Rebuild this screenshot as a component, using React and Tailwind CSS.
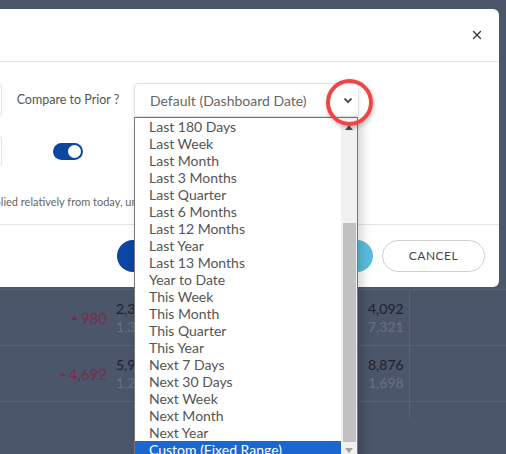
import { X } from "lucide-react";

const options = [
    "Last 180 Days",
    "Last Week",
    "Last Month",
    "Last 3 Months",
    "Last Quarter",
    "Last 6 Months",
    "Last 12 Months",
    "Last Year",
    "Last 13 Months",
    "Year to Date",
    "This Week",
    "This Month",
    "This Quarter",
    "This Year",
    "Next 7 Days",
    "Next 30 Days",
    "Next Week",
    "Next Month",
    "Next Year",
    "Custom (Fixed Range)",
];

const rows = [
    { delta: "980", a: "2,304", b: "1,324", c: "4,092", d: "7,321" },
    { delta: "4,692", a: "5,951", b: "1,268", c: "8,876", d: "1,698" },
];

function TableRow({ row }) {
    return (
        <div className="flex h-[56px] border-b border-[#58627a] text-[14px] leading-[18px]">
            <div className="w-[107px] flex items-center justify-end gap-[3px] text-[#7b2c50] text-[15px]">
                <svg width="7" height="4" viewBox="0 0 7 4">
                    <path d="M0 4 L3.5 0 L7 4 Z" fill="#7b2c50" />
                </svg>
                {row.delta}
            </div>
            <div className="w-[252px] pl-[9px] flex flex-col justify-center">
                <span className="text-[#1c2130]">{row.a}</span>
                <span className="text-[#687084]">{row.b}</span>
            </div>
            <div className="w-[51px] pl-[9px] flex flex-col justify-center border-r border-[#58627a]">
                <span className="text-[#1c2130]">{row.c}</span>
                <span className="text-[#687084]">{row.d}</span>
            </div>
            <div className="flex-1" />
        </div>
    );
}

export default function App() {
    return (
        <div className="relative w-[506px] h-[454px] overflow-hidden bg-[#4c566a] font-['Lato',sans-serif]">
            {/* dimmed page behind the modal */}
            <div className="h-[290px] border-b border-[#58627a]" />
            {rows.map((row) => (
                <TableRow key={row.delta} row={row} />
            ))}
            <div className="h-[16px] border-r border-[#58627a] w-[410px]" />

            {/* ================= MODAL ================= */}
            <div className="absolute left-[-100px] top-[9px] w-[599px] h-[278px] bg-white rounded-md flex flex-col text-[#555]">
                <div className="h-[53px] flex items-center justify-end pr-[15px] border-b border-[#e4e4e4]">
                    <X size={14} strokeWidth={2.2} className="text-[#333]" />
                </div>

                <div className="flex-1 px-[20px] pt-[21px]">
                    <div className="flex items-center">
                        <div className="w-[82px] h-[34px] border border-[#e2e2e2] rounded" />
                        <div className="w-[132px] text-center text-[12.5px]">
                            Compare to Prior ?
                        </div>
                        <div className="w-[225px] h-[34px] border border-[#e2e2e2] rounded shadow-[0_2px_4px_rgba(0,0,0,0.08)] flex items-center justify-between pl-[15px] pr-[5px] text-[14px] text-[#666]">
                            Default (Dashboard Date)
                            <svg width="10" height="7" viewBox="0 0 10 7">
                                <path d="M1.5 1.5 L5 5 L8.5 1.5" fill="none" stroke="#555" strokeWidth="2" />
                            </svg>
                        </div>
                    </div>

                    <div className="flex items-center mt-[18px]">
                        <div className="w-[82px] h-[32px] border border-[#e2e2e2] rounded" />
                        <div className="w-[132px] flex justify-center">
                            <div className="w-[30px] h-[17px] rounded-full bg-[#0d46a0] flex items-center justify-end pr-[2px]">
                                <div className="w-[13px] h-[13px] rounded-full bg-white" />
                            </div>
                        </div>
                    </div>

                    <p className="mt-[27px] ml-[-25px] text-[11px] text-[#666] whitespace-nowrap">
                        Relative dates are applied relatively from today, unless a custom range is chosen.
                    </p>
                </div>

                <div className="h-[63px] border-t border-[#e4e4e4] flex items-center justify-end gap-[9px] pr-[14px]">
                    <div className="w-[120px] h-[32px] rounded-full bg-[#0b46a0]" />
                    <div className="w-[127px] h-[32px] rounded-full bg-[#5bbedc]" />
                    <div className="w-[103px] h-[32px] rounded-full border border-[#cfcfcf] flex items-center justify-center text-[12px] tracking-[0.5px] text-[#444]">
                        CANCEL
                    </div>
                </div>
            </div>

            {/* ================= OPEN SELECT LIST ================= */}
            <div className="absolute left-[134px] top-[117px] w-[224px] h-[360px] bg-white border border-[#767676] shadow-[4px_4px_10px_rgba(0,0,0,0.18)] flex">
                <ul className="flex-1 text-[14px] leading-[17px] text-[#555]">
                    {options.map((opt) => (
                        <li
                            key={opt}
                            className={
                                opt === "Custom (Fixed Range)"
                                    ? "h-[17px] pl-[14px] bg-[#1a67d2] text-white"
                                    : "h-[17px] pl-[14px]"
                            }
                        >
                            {opt}
                        </li>
                    ))}
                </ul>
                <div className="w-[16px] h-[336px] bg-[#f1f1f1] flex flex-col items-center">
                    <svg width="8" height="5" viewBox="0 0 8 5" className="mt-[7px]">
                        <path d="M0 5 L4 0 L8 5 Z" fill="#505050" />
                    </svg>
                    <div className="w-[13px] h-[219px] bg-[#c1c1c1] mt-[93px]" />
                    <svg width="8" height="5" viewBox="0 0 8 5" className="mt-[6px]">
                        <path d="M0 0 L4 5 L8 0 Z" fill="#a3a3a3" />
                    </svg>
                </div>
            </div>

            {/* red highlight circle */}
            <div className="absolute left-[326px] top-[79px] w-[47px] h-[47px] rounded-full border-[4px] border-[#ef4545] shadow-[1px_2px_4px_rgba(0,0,0,0.25)]" />
        </div>
    );
}
